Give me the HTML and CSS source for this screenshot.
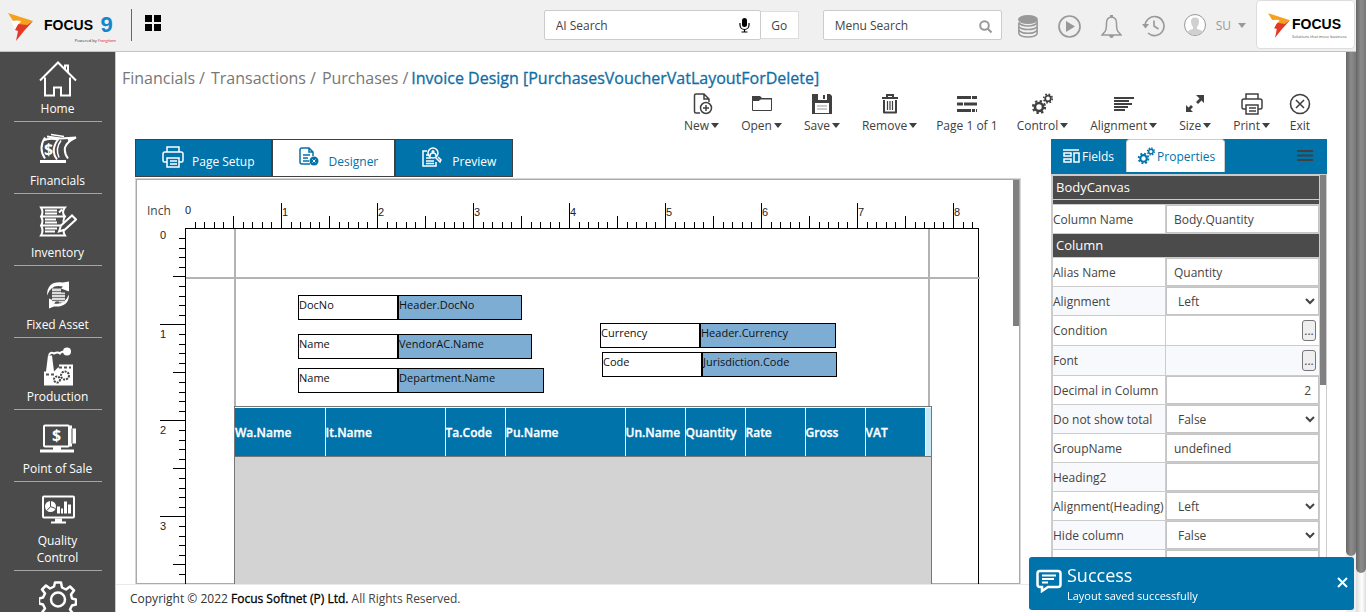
FILE: index.html
```html
<!DOCTYPE html>
<html lang="en">
<head>
<meta charset="utf-8">
<title>Invoice Design</title>
<link rel="stylesheet" href="styles.css">
</head>
<body>
<svg class="defs" width="0" height="0" aria-hidden="true">
  <symbol id="mark" viewBox="0 0 25 28">
    <path d="M0 0 25 8 19 12 10 12 13 8 5 8Z" fill="#f6a01f"/>
    <path d="M10 11 19 12 25 8 16 18 8 28 10 18 7 17Z" fill="#e23a26"/>
    <path d="M3 8q7-1 10 0-3 3-6 8z" fill="#fff"/>
  </symbol>
  <symbol id="printer" viewBox="0 0 22 22">
    <g fill="none" stroke="currentColor" stroke-width="1.5"><path d="M5 6V1h12v5M5 16H2.500q-1.500 0-1.500-1.500V8q0-2 2-2h16q2 0 2 2v6.500q0 1.500-1.500 1.500H17"/><path d="M5 12h12v9H5zM8 15h7M8 18h7"/></g>
  </symbol>
  <symbol id="gears" viewBox="0 0 22 22">
    <g fill="none" stroke="currentColor"><circle cx="8" cy="14" r="4" stroke-width="2.600"/><circle cx="8" cy="14" r="6" stroke-width="2.200" stroke-dasharray="2.350 2.360"/><circle cx="17" cy="5.500" r="2.800" stroke-width="1.800"/><circle cx="17" cy="5.500" r="4.300" stroke-width="1.600" stroke-dasharray="1.690 1.690"/></g>
  </symbol>
</svg>

<div class="app">
  <header class="topbar">
    <a class="brand" href="#" aria-label="Focus 9">
      <svg width="25" height="28"><use href="#mark"/></svg>
      <span class="brand-name"><span class="word">FOCUS</span><span class="nine">9</span><small>Powered by <em>Frangham</em></small></span>
    </a>
    <span class="rule"></span>
    <button class="icon-btn grid-btn" aria-label="Dashboard"><svg width="16" height="16"><path d="M0 0h7v7H0zM9 0h7v7H9zM0 9h7v7H0zM9 9h7v7H9z"/></svg></button>
    <div class="searches">
      <div class="field ai"><input type="text" aria-label="AI Search" placeholder="AI Search">
        <svg width="11" height="15" viewBox="0 0 11 15"><rect x="3" y="0" width="5" height="9" rx="2.500"/><path d="M1 5v2a4.500 4.500 0 0 0 9 0V5M5.500 11v3M2.500 14h6" fill="none" stroke="#000" stroke-width="1.200"/></svg>
      </div>
      <button class="go">Go</button>
      <div class="field menu"><input type="text" aria-label="Menu Search" placeholder="Menu Search">
        <svg width="13" height="13" viewBox="0 0 13 13" fill="none" stroke="#999" stroke-width="2"><circle cx="5.500" cy="5.500" r="4.300"/><path d="m8.500 8.500 4 4"/></svg>
      </div>
    </div>
    <nav class="actions">
      <button class="icon-btn" aria-label="Database"><svg width="20" height="23" viewBox="0 0 20 23"><ellipse cx="10" cy="4.500" rx="10" ry="4.500" fill="#999"/><g fill="none" stroke="#999" stroke-width="1.500"><path d="M.8 7.500v11Q2 22 10 22t9.200-3.500v-11Q17 11 10 11T.8 7.500M.8 11.500q2 3 9.200 3t9.200-3M.8 15q2 3.300 9.200 3.300T19.200 15"/></g></svg></button>
      <button class="icon-btn" aria-label="Play"><svg width="23" height="23" viewBox="0 0 23 23"><circle cx="11.500" cy="11.500" r="10.500" fill="none" stroke="#999" stroke-width="1.700"/><path d="m8 6 9 5.500L8 17z" fill="#999"/></svg></button>
      <button class="icon-btn" aria-label="Notifications"><svg width="21" height="23" viewBox="0 0 21 23"><path d="M10.500 2Q5.500 2.500 5.500 8q0 7-1.500 8.500L1 20h19l-3-3.500Q15.500 15 15.500 8q0-5.500-5-6z" fill="none" stroke="#999" stroke-width="1.500"/><path d="M9 0h3v3H9zM8 20h5q-.5 3-2.500 3T8 20z" fill="#999"/></svg></button>
      <button class="icon-btn" aria-label="History"><svg width="23" height="22" viewBox="0 0 23 22"><path d="M3 11A9.500 9.500 0 1 1 6 18M12 5.500V11l4.500 3" fill="none" stroke="#999" stroke-width="1.600"/><path d="M0 9h7l-3.500 4.500z" fill="#999"/></svg></button>
      <button class="user"><svg width="22" height="22" viewBox="0 0 22 22"><circle cx="11" cy="11" r="10.500" fill="#fff" stroke="#999"/><path d="M11 3.500q-4.500 0-4 5 .5 3 2 4.500v2q-4 .5-5.500 2.500Q7 21 11 21t7.500-3.500Q17 15.500 13 15v-2q1.500-1.500 2-4.500.5-5-4-5" fill="#d0d0d0"/></svg>SU<i class="caret"></i></button>
    </nav>
    <a class="company" href="#"><svg width="22" height="25"><use href="#mark"/></svg><span class="company-name">FOCUS<small>Solutions that move business</small></span></a>
  </header>

  <div class="body">
    <nav class="sidebar">
      <a href="#"><svg width="38" height="36" viewBox="0 0 38 36" fill="none" stroke="#fff" stroke-width="2"><path d="M1 19 19 1l18 18M6 16v18h9v-8h7v8h9V16M26 8V4h3v7"/></svg>Home</a>
      <a href="#"><svg width="38" height="36" viewBox="0 0 38 36" fill="none" stroke="#fff" stroke-width="2"><path d="M6 5q-7 11 0 21M4 8q6-3 15-1-8 11-1 20M8 4l14 2 15-1q-9 4-11 10-1 6 3 11"/><path d="M22 8q-6 8-2 17M12 2l13 2" stroke-width="1.500"/><path d="M28 5h9l-7 5z" fill="#fff" stroke="none"/><path d="M1 29h26" stroke-width="3"/><text class="coin" x="5" y="22">$</text></svg>Financials</a>
      <a href="#"><svg width="38" height="36" viewBox="0 0 38 36" fill="none" stroke="#fff" stroke-width="2"><path d="M2 3h24q-4 5 0 9-3 4 0 9-3 5 0 10H2q3-5 0-10 3-4 0-9 3-4 0-9zM3 12h22M3 21h22M6 6h12M6 9h12M6 15h11M6 18h12M6 24h12M6 27h10M20 8l3-3"/><path d="m20 27 2-6 11-10 4 4-11 10z" fill="#4b4b4b"/></svg>Inventory</a>
      <a href="#"><svg width="38" height="36" viewBox="0 0 38 36"><path d="M8 19Q8 4 24 6l6-1v10l-8-3 2-2Q12 7 8 19zM30 18q0 13-15 12l-5 2V22l7 3-2 2q10 2 15-9z" fill="#fff"/><path d="M13 12h9v13h-9zM20 16h6v10h-6z" fill="#ddd"/><path d="M13 15h9M13 18h13M13 21h13M13 24h13" stroke="#777"/></svg>Fixed Asset</a>
      <a href="#"><svg width="38" height="38" viewBox="0 0 38 38"><path d="M5 38V24h2L9 8h4l2 16 4-4h1v-3h14v21z" fill="#fff"/><path d="M10 8q1-4 5-2 4-2 6 0 2-3 5-1l2-2" fill="none" stroke="#fff" stroke-width="2"/><circle cx="28" cy="4" r="4" fill="#fff"/><circle cx="26" cy="28" r="4" fill="none" stroke="#444" stroke-width="2" stroke-dasharray="2 1"/><circle cx="18" cy="32" r="3" fill="none" stroke="#444" stroke-width="2" stroke-dasharray="2 1"/><path d="M7 27h9M20 20h12" stroke="#555" stroke-width="2" stroke-dasharray="3 2"/></svg>Production</a>
      <a href="#"><svg width="38" height="36" viewBox="0 0 38 36"><rect x="5" y="5" width="25" height="21" rx="1" fill="none" stroke="#fff" stroke-width="2"/><path d="M31 5h2v3h4v15h-4v3h-2zM14 26h8v3h13v3H1v-3h13z" fill="#fff"/><path d="M33 8v15" stroke="#4b4b4b"/><text class="coin" x="13" y="20">$</text></svg>Point of Sale</a>
      <a href="#"><svg width="38" height="36" viewBox="0 0 38 36"><rect x="4" y="4" width="31" height="21" rx="1" fill="none" stroke="#fff" stroke-width="2"/><path d="M16 26h7v3h4v2H12v-2h4zM18 14h3v7h-3zM22 16h2v5h-2zM25 9h3v12h-3zM29 12h3v9h-3z" fill="#fff"/><circle cx="11.500" cy="14" r="5.500" fill="#fff"/><path d="M11.500 8.500V14l5 2M11.500 14 8 18" fill="none" stroke="#4b4b4b"/></svg>Quality<br>Control</a>
      <a href="#" aria-label="Settings"><svg width="38" height="38" viewBox="0 0 38 38" fill="none" stroke="#fff" stroke-width="2.500"><circle cx="19" cy="19" r="7"/><path d="M16 2h6l1 5 4 2 4-3 4 4-3 4 1 4 4 1v5l-4 1-2 4 3 4-4 4-4-3-4 1-1 4h-5l-1-4-4-2-4 3-4-4 3-4-2-4-4-1v-5l4-1 2-4-3-4 4-4 4 3 4-2z" stroke-linejoin="round"/></svg></a>
    </nav>

    <main class="content">
      <nav class="crumbs"><a href="#">Financials</a><span>/</span><a href="#">Transactions</a><span>/</span><a href="#">Purchases</a><span>/</span><strong>Invoice Design [PurchasesVoucherVatLayoutForDelete]</strong></nav>

      <div class="toolbar">
        <button><svg viewBox="0 0 22 22" fill="none" stroke="currentColor" stroke-width="1.500"><path d="M9 20H5q-1.500 0-1.500-1.500v-16Q3.500 1 5 1h8l5 5v3M13 1v5h5"/><circle cx="15" cy="15" r="5.500"/><path d="M12 15h6M15 12v6"/></svg><span>New<i class="caret"></i></span></button>
        <button><svg viewBox="0 0 22 22"><path d="M1 3h8l2 2h10v3H1z" fill="currentColor"/><path d="M1.500 7.500H8L9.500 6h11v11.500h-19z" fill="#fff" stroke="currentColor"/></svg><span>Open<i class="caret"></i></span></button>
        <button><svg viewBox="0 0 22 22"><path d="M1 1h18l2 2v18H1z" fill="currentColor"/><path d="M7 1h9v6H7zM4 10h14v10H4z" fill="#fff"/><path d="M12 2h2v4h-2z" fill="currentColor"/><path d="M6 13h10M6 16h10" stroke="#999"/></svg><span>Save<i class="caret"></i></span></button>
        <button><svg viewBox="0 0 22 22" fill="none" stroke="currentColor" stroke-width="2"><path d="M3 5h16M8 4V2h6v2"/><path d="M5 7v12.500h12V7" stroke-linejoin="round"/><path d="M8.500 8v9M11 8v9M13.500 8v9" stroke-width="1.200"/></svg><span>Remove<i class="caret"></i></span></button>
        <button class="plain"><svg viewBox="0 0 22 22" stroke="currentColor" stroke-width="3"><path d="M1 4.500h14M16 4.500h5M1 11h6M8 11h13M1 17.500h14M16 17.500h3M20 17.500h1"/></svg><span>Page 1 of 1</span></button>
        <button><svg><use href="#gears"/></svg><span>Control<i class="caret"></i></span></button>
        <button><svg viewBox="0 0 22 22" stroke="currentColor" stroke-width="2"><path d="M1 5h20M1 8h15M1 11h18M1 14h14M1 17h11"/></svg><span>Alignment<i class="caret"></i></span></button>
        <button><svg viewBox="0 0 22 22" fill="currentColor"><path d="M12 2h8v8l-2.500-2.500-3.500 3.500-2-2 3.500-3.500zM2 12l2.500 2.500L7 12l2 2-2.500 2.500L9 19H2z"/></svg><span>Size<i class="caret"></i></span></button>
        <button><svg><use href="#printer"/></svg><span>Print<i class="caret"></i></span></button>
        <button class="plain"><svg viewBox="0 0 22 22" fill="none" stroke="currentColor" stroke-width="1.600"><circle cx="11" cy="11" r="9.500"/><path d="m7 7 8 8M15 7l-8 8"/></svg><span>Exit</span></button>
      </div>

      <div class="workspace">
        <section class="designer">
          <div class="tabs">
            <button><svg width="22" height="22"><use href="#printer"/></svg>Page Setup</button>
            <button class="on"><svg width="20" height="20" viewBox="0 0 20 20" fill="none" stroke="#0073aa" stroke-width="1.500"><path d="M11 17H3q-2 0-2-2V3q0-2 2-2h7l4 4v4M10 1v4h4M4 8h7M4 11h5M4 14h6"/><circle cx="15" cy="14" r="4.500" fill="#0073aa" stroke="none"/><path d="m13.500 12.500 3 3m0-3-3 3" stroke="#fff" stroke-width="1"/></svg>Designer</button>
            <button><svg width="20" height="20" viewBox="0 0 20 20" fill="none" stroke="#fff" stroke-width="1.500"><path d="M5 4H1v15h13v-4M4 8h3M4 11h5M4 14h8M4 16.500h8M13 10l5 5 1-2-3-3"/><circle cx="11" cy="6" r="5"/><path d="M8 9q0-3 3-3t3 3"/><circle cx="11" cy="4.500" r="1.500" fill="#fff" stroke="none"/></svg>Preview</button>
          </div>
          <div class="frame">
            <span class="unit">Inch</span>
            <svg class="ruler-x" width="794" height="49" shape-rendering="crispEdges">
              <defs><pattern id="px" x="1" width="96" height="49" patternUnits="userSpaceOnUse"><path d="M9 42h1v6H9zM18 42h1v6h-1zM28 42h1v6h-1zM37 42h1v6h-1zM47 36h1v12h-1zM57 42h1v6h-1zM66 42h1v6h-1zM76 42h1v6h-1zM85 42h1v6h-1zM95 23h1v25h-1z"/></pattern></defs>
              <rect x="1" width="793" height="49" fill="url(#px)"/><path d="M0 48h794v1H0z"/>
              <text x="0" y="34">0</text><text x="97" y="36">1</text><text x="193" y="36">2</text><text x="289" y="36">3</text><text x="385" y="36">4</text><text x="481" y="36">5</text><text x="577" y="36">6</text><text x="673" y="36">7</text><text x="769" y="36">8</text>
            </svg>
            <svg class="ruler-y" shape-rendering="crispEdges">
              <defs><pattern id="py" y="1" width="48" height="96" patternUnits="userSpaceOnUse"><path d="M42 9h6v1h-6zM42 19h6v1h-6zM42 28h6v1h-6zM42 38h6v1h-6zM36 47h12v1H36zM42 57h6v1h-6zM42 67h6v1h-6zM42 76h6v1h-6zM42 86h6v1h-6zM23 95h25v1H23z"/></pattern></defs>
              <rect y="1" width="48" height="100%" fill="url(#py)"/>
              <text x="23" y="11">0</text><text x="23" y="110">1</text><text x="23" y="206">2</text><text x="23" y="302">3</text>
            </svg>
            <div class="paper">
              <i class="guide left"></i><i class="guide right"></i><i class="guide top"></i>
              <div class="pair p1"><span>DocNo</span><span>Header.DocNo</span></div>
              <div class="pair p2"><span>Name</span><span>VendorAC.Name</span></div>
              <div class="pair p3"><span>Name</span><span>Department.Name</span></div>
              <div class="pair p4"><span>Currency</span><span>Header.Currency</span></div>
              <div class="pair p5"><span>Code</span><span>Jurisdiction.Code</span></div>
              <div class="grid-body">
                <table class="cols">
                  <colgroup><col class="w90"><col class="w120"><col class="w60"><col class="w120"><col class="w60"><col class="w60"><col class="w60"><col class="w60"><col class="w60"></colgroup>
                  <tr><th>Wa.Name</th><th>It.Name</th><th>Ta.Code</th><th>Pu.Name</th><th>Un.Name</th><th>Quantity</th><th>Rate</th><th>Gross</th><th>VAT</th></tr>
                </table>
              </div>
            </div>
            <i class="thumb"></i>
          </div>
        </section>

        <aside class="panel">
          <div class="panel-tabs">
            <button><svg width="17" height="14" viewBox="0 0 17 14" fill="none" stroke="#fff" stroke-width="1.500"><path d="M0 1h16M1 4h7v3H1zM1 10h7v3H1zM11 4h5v9h-5z"/></svg>Fields</button>
            <button class="on"><svg width="18" height="18"><use href="#gears"/></svg>Properties</button>
            <button class="burger" aria-label="Menu"><svg width="16" height="11" stroke="#404040" stroke-width="2"><path d="M0 1h16M0 5.500h16M0 10h16"/></svg></button>
          </div>
          <div class="props">
            <table>
              <colgroup><col class="names"><col></colgroup>
              <tr><th colspan="2">BodyCanvas</th></tr>
              <tr class="thin"><td colspan="2"></td></tr>
              <tr><td><label for="f1">Column Name</label></td><td><input id="f1" type="text" value="Body.Quantity"></td></tr>
              <tr><th colspan="2">Column</th></tr>
              <tr><td><label for="f2">Alias Name</label></td><td><input id="f2" type="text" value="Quantity"></td></tr>
              <tr class="alt"><td><label for="f3">Alignment</label></td><td><select id="f3"><option>Left</option></select></td></tr>
              <tr><td><label for="f4">Condition</label></td><td class="more"><button id="f4">...</button></td></tr>
              <tr class="alt"><td><label for="f5">Font</label></td><td class="more"><button id="f5">...</button></td></tr>
              <tr><td><label for="f6">Decimal in Column</label></td><td><input id="f6" class="num" type="text" value="2"></td></tr>
              <tr class="alt"><td><label for="f7">Do not show total</label></td><td><select id="f7"><option>False</option></select></td></tr>
              <tr><td><label for="f8">GroupName</label></td><td><input id="f8" type="text" value="undefined"></td></tr>
              <tr class="alt"><td><label for="f9">Heading2</label></td><td><input id="f9" type="text"></td></tr>
              <tr><td><label for="f10">Alignment(Heading)</label></td><td><select id="f10"><option>Left</option></select></td></tr>
              <tr class="alt"><td><label for="f11">Hide column</label></td><td><select id="f11"><option>False</option></select></td></tr>
              <tr><td></td><td><input type="text" aria-label="Value"></td></tr>
            </table>
            <i class="thumb"></i>
          </div>
        </aside>
      </div>
      <footer><b>Copyright © 2022 <strong>Focus Softnet (P) Ltd.</strong></b> All Rights Reserved.</footer>
    </main>
    <div class="scroll inner"><i></i></div>
  </div>
</div>
<div class="scroll outer"><i></i></div>

<div class="toast" role="status">
  <svg width="26" height="24" viewBox="0 0 26 24" fill="none" stroke="#fff" stroke-width="2.500"><path d="M4 2h18q2.500 0 2.500 2.500v11Q24.500 18 22 18H12l-6 4v-4H4q-2.500 0-2.500-2.500v-11Q1.500 2 4 2z"/><path d="M6 6.500h14M6 10h12M6 13.500h6" stroke-width="1.800"/></svg>
  <div><h2>Success</h2><p>Layout saved successfully</p></div>
  <button aria-label="Close"><svg width="11" height="11" stroke="#fff" stroke-width="2"><path d="m1 1 9 9M10 1l-9 9"/></svg></button>
</div>
</body>
</html>
```

FILE: styles.css
```css
* { box-sizing: border-box; }
html, body { height: 100%; }
body { margin: 0; display: flex; overflow: hidden; background: #fff; color: #444; font: 12px/17px "Open Sans", sans-serif; }
button { margin: 0; padding: 0; border: 0; background: none; color: inherit; font: inherit; cursor: pointer; }
input, select { font: inherit; color: inherit; }
a { color: inherit; text-decoration: none; }
.defs { position: absolute; }
.caret { display: inline-block; margin-left: 2px; border: 4px solid transparent; border-top: 5px solid currentColor; border-bottom: 0; vertical-align: 2px; }
.app { flex: 1; min-width: 0; display: flex; flex-direction: column; }

.topbar { flex: none; display: flex; align-items: flex-start; height: 52px; background: #f0f0f0; border-bottom: 1px solid #c4c4c4; }
.brand { display: flex; padding: 13px 0 0 8px; gap: 11px; }
.brand-name { display: grid; grid-template-columns: auto auto; column-gap: 4px; width: 72px; }
.word, .company-name { font-family: "Liberation Sans", sans-serif; font-weight: bold; color: #000; }
.word { font-size: 14px; line-height: 25px; }
.nine { font: bold 22px/24px "Liberation Sans", sans-serif; color: #1387cb; }
.brand-name small { grid-column: 1 / 3; text-align: right; font-size: 4px; line-height: 6px; color: #333; }
.brand-name em { color: #e02030; }
.rule { width: 1px; height: 32px; margin: 9px 0 0 15px; background: #666; }
.icon-btn svg, .user svg { display: block; }
.grid-btn { margin: 15px 0 0 13px; }
.searches { display: flex; margin: 10px 0 0 auto; }
.field { display: flex; align-items: center; height: 30px; padding: 0 10px 0 11px; border: 1px solid #ccc; border-radius: 2px; background: #fff; }
.field input { flex: 1; min-width: 0; border: 0; outline: 0; padding: 0; background: none; }
.field input::placeholder { color: #444; opacity: 1; }
.ai { width: 217px; }
.menu { width: 179px; margin-left: 24px; padding-right: 9px; }
.menu svg { margin-top: 3px; }
.go { height: 28px; width: 38px; margin-top: 1px; border: 1px solid #ddd; border-left: 0; background: #fff; }
.actions { display: flex; align-items: flex-start; gap: 20px; margin: 15px 10px 0 16px; color: #999; }
.user { display: flex; align-items: center; gap: 10px; margin: -1px 0 0 -1px; }
.user .caret { margin-left: -3px; }
.company { display: flex; gap: 2px; width: 99px; height: 49px; margin-right: 1px; padding: 12px 0 0 11px; background: #fff; border: 1px solid #ddd; border-radius: 4px; }
.company-name { font-size: 14px; line-height: 22px; }
.company-name small { display: block; font: 4px/4px "Open Sans", sans-serif; color: #555; white-space: nowrap; }

.body { flex: 1; min-height: 0; display: flex; }
.sidebar { flex: none; width: 115px; overflow: hidden; display: flex; flex-direction: column; align-items: center; background: #4b4b4b; color: #fff; text-align: center; }
.sidebar a { flex: none; width: 88px; padding: 9px 0 4px; border-bottom: 1px solid #a5a5a5; }
.sidebar a:first-child { height: 70px; padding-top: 8px; }
.sidebar svg { display: block; margin: 0 auto 2px; height: 39px; }
.sidebar a:first-child svg { margin-bottom: 1px; }
.coin { font: bold 16px "Open Sans", sans-serif; fill: #fff; stroke: none; }

.content { flex: 1; min-width: 0; display: flex; flex-direction: column; border-left: 1px solid #ccc; }
.crumbs { padding: 14px 0 0 6px; font-size: 16px; line-height: 24px; color: #777; white-space: nowrap; }
.crumbs span { margin: 0 6px 0 4px; }
.crumbs span:nth-last-child(2) { margin-right: 3px; }
.crumbs strong { font-weight: 500; color: #0f6da5; -webkit-text-stroke: 0.3px #0f6da5; }
.toolbar { display: flex; justify-content: flex-end; gap: 22px; padding: 3px 38px 5px 0; color: #404040; }
.toolbar .plain { margin: 0 -3px; }
.toolbar svg { display: block; width: 22px; height: 22px; margin: 0 auto 2px; }
.toolbar span { white-space: nowrap; }

.workspace { flex: 1; min-height: 0; display: flex; gap: 30px; padding: 0 19px; }
.designer { flex: 1; min-width: 0; display: flex; flex-direction: column; }
.tabs { display: flex; flex: none; }
.tabs button { display: flex; align-items: center; gap: 8px; height: 38px; padding: 7px 16px 0 26px; background: #0073aa; border: 1px solid #404040; color: #fff; line-height: 24px; }
.tabs .on { background: #fff; color: #0073aa; gap: 10px; }
.tabs button:last-child { gap: 10px; }
.tabs svg { margin-bottom: 9px; }
.frame { position: relative; flex: 1; min-height: 0; margin-top: 1px; overflow: hidden; display: grid; grid-template: 48px 1fr / 48px 1fr; border: 1px solid #d6d6d6; border-bottom: 0; box-shadow: inset 0 0 0 1px #aaa; padding: 1px 1px 0; }
.unit { padding: 22px 0 0 10px; }
.ruler-x { display: block; }
.ruler-x text, .ruler-y text { font: 11px "Liberation Sans", sans-serif; fill: #222; }
.ruler-y { display: block; width: 48px; height: 100%; }
.paper { position: relative; width: 794px; border: 1px solid #000; border-bottom: 0; color: #111; }
.guide { position: absolute; background: #b3b3b3; }
.guide.left { left: 48px; top: 0; bottom: 0; width: 2px; }
.guide.right { left: 742px; top: 0; bottom: 0; width: 2px; }
.guide.top { left: 0; right: -2px; top: 48px; height: 2px; }
.pair { position: absolute; display: flex; height: 25px; font-size: 11px; line-height: 18px; }
.pair span { flex: 1; border: 1px solid #000; background: #7eadd4; white-space: nowrap; }
.pair span:first-child { flex: 0 0 100px; background: #fff; }
.p1 { left: 112px; top: 66px; width: 224px; }
.p2 { left: 112px; top: 105px; width: 234px; }
.p3 { left: 112px; top: 139px; width: 246px; }
.p4 { left: 414px; top: 94px; width: 236px; }
.p5 { left: 416px; top: 123px; width: 235px; }
.grid-body { position: absolute; left: 48px; top: 177px; bottom: 0; width: 698px; border: 1px solid #777; border-bottom: 0; background: #d3d3d3; }
.cols { display: block; width: 696px; height: 50px; table-layout: fixed; border-collapse: collapse; border-top: 1px solid #fff; border-bottom: 1px solid #777; background: linear-gradient(to right, #0073aa 690px, #c9e8f5 690px); }
.cols th { height: 48px; padding: 0; text-align: left; color: #fff; font-size: 12px; font-weight: 600; -webkit-text-stroke: 0.3px #fff; border-right: 1px solid #fff; }
.w60 { width: 60px; }
.w90 { width: 90px; }
.w120 { width: 120px; }
.frame .thumb { position: absolute; right: 1px; top: 1px; width: 6px; height: 146px; background: #808080; }

.panel { flex: none; width: 276px; display: flex; flex-direction: column; }
.panel-tabs { flex: none; display: flex; height: 35px; background: #0073aa; color: #fff; font-weight: 500; }
.panel-tabs button { display: flex; align-items: center; gap: 2px; padding: 1px 12px 0; height: 33px; }
.panel-tabs .on { padding: 0 9px 0 10px; background: #fff; color: #0073aa; border: 1px solid #ccc; border-bottom: 0; border-radius: 4px 4px 0 0; font-weight: 400; }
.panel-tabs .burger { margin-left: auto; padding: 0 14px; }
.props { position: relative; flex: 1; min-height: 0; overflow: hidden; border: 1px solid #ccc; border-bottom: 0; }
.props table { width: 268px; border-collapse: collapse; table-layout: fixed; }
.names { width: 113px; }
.props th { height: 24px; padding: 0 0 1px 3px; background: #4b4b4b; color: #fff; font-size: 13px; font-weight: 400; text-align: left; border: 1px solid #ccc; }
.props td { height: 29px; padding: 0; border: 1px solid #ccc; white-space: nowrap; }
.props .thin td { height: 5px; background: #4b4b4b; }
.alt { background: #f8f9fc; }
.props input, .props select { display: block; width: 100%; height: 28px; border: 1px solid #c4c4c4; border-radius: 0; background: #fff; padding: 0 8px 0 7px; outline: 0; }
.props select { padding: 0 0 0 7px; }
.props .num { text-align: right; padding-right: 7px; }
.props .more { height: 30px; padding-right: 3px; text-align: right; }
.more button { width: 14px; height: 21px; vertical-align: middle; border: 1px solid #767676; border-radius: 3px; background: #efefef; }
.props .thumb { position: absolute; right: 0; top: 0; width: 6px; height: 210px; background: #808080; }

footer { flex: none; height: 28px; padding: 5px 14px; border-top: 1px solid #e8e8e8; }
footer b { font-weight: 500; color: #333; }
footer strong { font-weight: 500; color: #000; -webkit-text-stroke: 0.3px #000; }

.scroll { flex: none; width: 10px; background: #f0f0f0; }
.scroll i { display: block; border-radius: 0 0 5px 5px; background: linear-gradient(to right, #666, #8c8c8c 50%, #777); }
.inner i { height: 90%; }
.outer { background: linear-gradient(to right, #ddd, #fff 60%, #ddd); }
.outer i { height: 573px; }

.toast { position: fixed; right: 12px; bottom: 2px; width: 325px; height: 53px; display: flex; gap: 5px; padding: 6px 6px 0 7px; background: #0073aa; border-radius: 3px; color: #fff; }
.toast > svg { margin-top: 6px; }
.toast h2 { margin: 0; font-size: 18px; line-height: 24px; font-weight: 400; }
.toast p { margin: 0; font-size: 11px; line-height: 17px; }
.toast button { margin: 0 0 6px auto; }
```
